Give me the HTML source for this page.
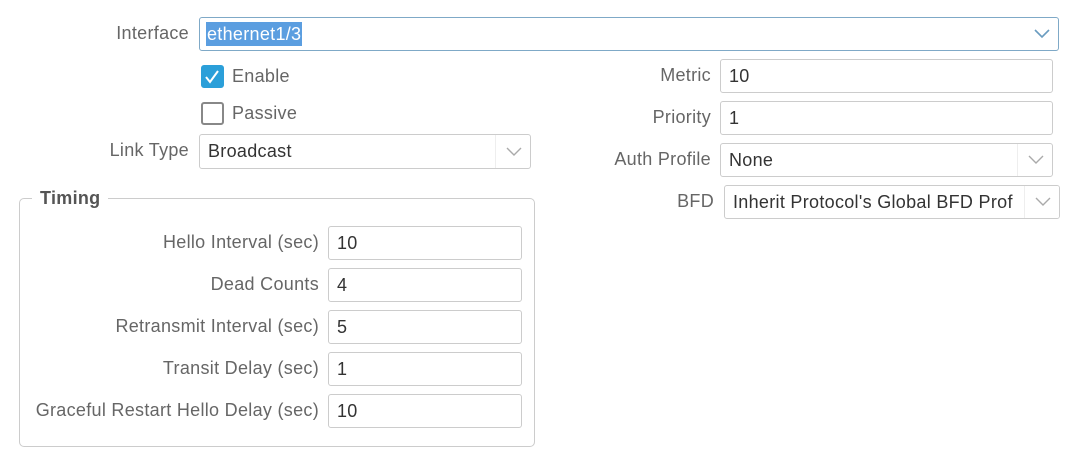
<!DOCTYPE html>
<html><head><style>
body{margin:0;width:1080px;height:458px;background:#fff;font-family:"Liberation Sans",sans-serif;font-size:18px;letter-spacing:0.3px;color:#666;position:relative;overflow:hidden}
.l{position:absolute;text-align:right;white-space:nowrap;line-height:20px}
.i{position:absolute;box-sizing:border-box;border:1px solid #ccc;border-radius:3px;background:#fff;color:#333;padding-left:8px;white-space:nowrap;overflow:hidden}
.ch{position:absolute;top:0;bottom:0;right:0;width:34px;border-left:1px solid #eee}
.ch svg{position:absolute;left:10px;top:50%;margin-top:-5px}
.cb{position:absolute;width:23px;height:23px;box-sizing:border-box;border:2px solid #888;border-radius:3px}
</style></head><body>
<div class="l" style="right:891px;top:23px">Interface</div>
<div class="i" style="left:199px;top:17px;width:860px;height:34px;border-color:#7fa9c7;line-height:32px;padding-left:6px"><span style="background:#5b9ee0;color:#fff;padding:2px 1px">ethernet1/3</span>
<div class="ch" style="border:none"><svg width="16" height="10"><path d="M1 1l7 7 7-7" fill="none" stroke="#6a9cc0" stroke-width="1.6"/></svg></div></div>

<div class="cb" style="left:201px;top:65px;background:#2b9fd9;border-color:#2b9fd9"><svg width="19" height="19" style="position:absolute;left:0;top:0"><path d="M3 10l4 5 8-11" fill="none" stroke="#fff" stroke-width="2"/></svg></div>
<div class="l" style="left:232px;top:66px">Enable</div>
<div class="cb" style="left:201px;top:102px"></div>
<div class="l" style="left:232px;top:103px">Passive</div>

<div class="l" style="right:891px;top:140px">Link Type</div>
<div class="i" style="left:199px;top:134px;width:332px;height:35px;line-height:32px">Broadcast<div class="ch"><svg width="16" height="10"><path d="M1 1l7 7 7-7" fill="none" stroke="#aaa" stroke-width="1.4"/></svg></div></div>

<div class="l" style="right:369px;top:65px">Metric</div>
<div class="i" style="left:720px;top:59px;width:333px;height:34px;line-height:32px">10</div>
<div class="l" style="right:369px;top:107px">Priority</div>
<div class="i" style="left:720px;top:101px;width:333px;height:34px;line-height:32px">1</div>
<div class="l" style="right:369px;top:149px">Auth Profile</div>
<div class="i" style="left:720px;top:143px;width:333px;height:34px;line-height:32px">None<div class="ch"><svg width="16" height="10"><path d="M1 1l7 7 7-7" fill="none" stroke="#aaa" stroke-width="1.4"/></svg></div></div>
<div class="l" style="right:366px;top:191px">BFD</div>
<div class="i" style="left:724px;top:185px;width:336px;height:34px;line-height:32px;padding-left:8px">Inherit Protocol's Global BFD Prof<div class="ch" style="background:#fff"><svg width="16" height="10"><path d="M1 1l7 7 7-7" fill="none" stroke="#aaa" stroke-width="1.4"/></svg></div></div>

<div style="position:absolute;left:19px;top:198px;width:516px;height:249px;box-sizing:border-box;border:1px solid #ccc;border-radius:5px"></div>
<div class="l" style="left:32px;top:188px;background:#fff;padding:0 8px;font-weight:bold;color:#555">Timing</div>

<div class="l" style="right:761px;top:232px">Hello Interval (sec)</div>
<div class="i" style="left:328px;top:226px;width:194px;height:34px;line-height:32px">10</div>
<div class="l" style="right:761px;top:274px">Dead Counts</div>
<div class="i" style="left:328px;top:268px;width:194px;height:34px;line-height:32px">4</div>
<div class="l" style="right:761px;top:316px">Retransmit Interval (sec)</div>
<div class="i" style="left:328px;top:310px;width:194px;height:34px;line-height:32px">5</div>
<div class="l" style="right:761px;top:358px">Transit Delay (sec)</div>
<div class="i" style="left:328px;top:352px;width:194px;height:34px;line-height:32px">1</div>
<div class="l" style="right:761px;top:400px">Graceful Restart Hello Delay (sec)</div>
<div class="i" style="left:328px;top:394px;width:194px;height:34px;line-height:32px">10</div>
</body></html>
